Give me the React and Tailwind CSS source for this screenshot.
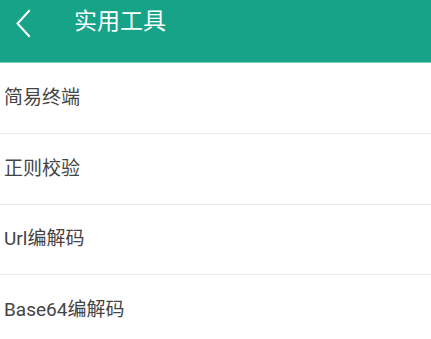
const tools = ['简易终端', '正则校验', 'Url编解码', 'Base64编解码'];

export default function App() {
  return (
    <div className="min-h-screen bg-white font-['Roboto','Noto_Sans_CJK_SC',sans-serif]">
      <header className="flex h-[63px] items-start border-b border-[#7fd0be] bg-[#17a388]">
        <div className="flex h-[44px] w-[74px] items-center pl-[8px]">
          <svg width="30" height="32" viewBox="0 0 30 32" fill="none" className="text-white">
            <path d="M21 5 L9.5 17.5 L21 30" stroke="currentColor" strokeWidth="2" strokeLinecap="square" />
          </svg>
        </div>
        <h1 className="flex h-[44px] items-center text-[23px] text-white">实用工具</h1>
      </header>
      <ul>
        {tools.map((name, i) => (
          <li
            key={name}
            className={`flex items-center border-b border-[#ebebeb] pl-[4px] text-[19px] text-[#444444] ${i === 0 ? 'h-[71px]' : 'h-[70.5px]'}`}
          >
            {name}
          </li>
        ))}
      </ul>
    </div>
  );
}
